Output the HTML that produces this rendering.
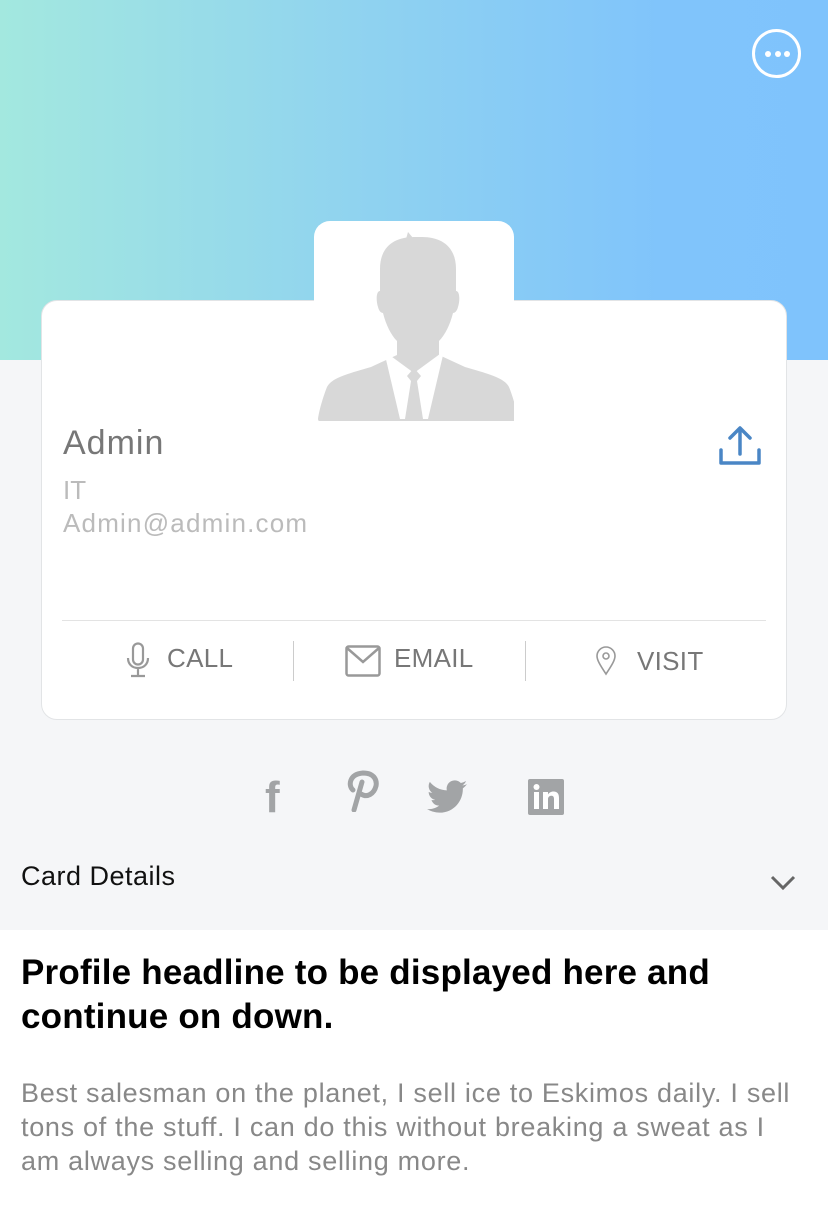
<!DOCTYPE html>
<html><head><meta charset="utf-8"><style>
*{margin:0;padding:0;box-sizing:border-box}
body{width:828px;height:1206px;overflow:hidden;background:#fff;font-family:"Liberation Sans",Helvetica,Arial,sans-serif;position:relative}
.hdr{position:absolute;left:0;top:0;width:828px;height:360px;background:linear-gradient(90deg,#a3e8df 0%,#8fd2f0 45%,#80c4fb 80%,#7fc3fc 100%)}
.gray{position:absolute;left:0;top:360px;width:828px;height:570px;background:#f5f6f8}
.more{position:absolute;left:752px;top:29px;width:49px;height:49px;border:3px solid #fff;border-radius:50%}
.more i{position:absolute;top:19px;width:6px;height:6px;background:#fff;border-radius:50%}
.card{position:absolute;left:41px;top:300px;width:746px;height:420px;background:#fff;border:1px solid #e2e4e6;border-radius:16px}
.tab{position:absolute;left:314px;top:221px;width:200px;height:200px;background:#fff;border-radius:16px}
.t{position:absolute;white-space:nowrap}
.act{position:absolute;top:643px;font-size:26px;color:#777;letter-spacing:0.3px}
.sep{position:absolute;top:641px;width:1px;height:40px;background:#ccc}
</style></head><body>
<div class="hdr"></div><div class="gray"></div>
<div class="more"><i style="left:10px"></i><i style="left:19.5px"></i><i style="left:29px"></i></div>
<div class="card"></div>
<div class="tab"></div>
<svg style="position:absolute;left:314px;top:221px" width="200" height="200" viewBox="0 0 200 200">
<path fill="#d8d8d8" d="M100 16c-20 0-34 10-34 32v22c-4 0-4 10-2 16 1 4 3 6 5 6 3 12 8 22 14 28v14l-26 12c-28 8-40 12-44 20-4 10-8 24-9 32 0 2 2 4 6 4h188c4 0 6-2 6-4-1-8-5-22-9-32-4-8-16-12-44-20l-26-12v-14c6-6 11-16 14-28 2 0 4-2 5-6 2-6 2-16-2-16V48c0-22-14-32-34-32z"/>
<path fill="#d8d8d8" d="M92 18l2-7 5 6z"/>
<path fill="#fff" d="M70 130l30 22 30-22-16 68H86z"/>
<path fill="#d8d8d8" d="M93 155l7-8 7 8-4 5 6 38H91l6-38z"/>
</svg>
<div class="t" style="left:63px;top:424px;font-size:34px;color:#777;letter-spacing:1px">Admin</div>
<div class="t" style="left:63px;top:475px;font-size:26px;color:#bbb">IT</div>
<div class="t" style="left:63px;top:508px;font-size:26px;color:#bbb;letter-spacing:1.2px">Admin@admin.com</div>
<svg style="position:absolute;left:718px;top:426px" width="44" height="42" viewBox="0 0 44 42" fill="none" stroke="#4a86c5" stroke-width="3.5" stroke-linecap="round" stroke-linejoin="round"><path d="M22 28V3M12 12l10-10 10 10M3 24v13h38V24"/></svg>
<div style="position:absolute;left:62px;top:620px;width:704px;height:1px;background:#e3e3e3"></div>
<svg style="position:absolute;left:124px;top:642px" width="28" height="36" viewBox="0 0 28 36" fill="none" stroke="#999" stroke-width="2.2"><rect x="9" y="1.5" width="10" height="21" rx="5"/><path d="M4 16c0 6 4 10 10 10s10-4 10-10M14 26v7M7 34h14"/></svg>
<div class="act" style="left:167px">CALL</div>
<div class="sep" style="left:293px"></div>
<svg style="position:absolute;left:345px;top:645px" width="36" height="32" viewBox="0 0 36 32" fill="none" stroke="#999" stroke-width="2.5"><rect x="1.5" y="1.5" width="33" height="29" rx="2"/><path d="M2 3l16 14 16-14"/></svg>
<div class="act" style="left:394px">EMAIL</div>
<div class="sep" style="left:525px"></div>
<svg style="position:absolute;left:594px;top:646px" width="24" height="30" viewBox="0 0 24 30" fill="none" stroke="#999" stroke-width="1.6"><path d="M12 28C6 19 3 14 3 10a9 9 0 0118 0c0 4-3 9-9 18z"/><circle cx="12" cy="10" r="3"/></svg>
<div class="act" style="left:637px;top:646px">VISIT</div>
<div class="t" style="left:265px;top:773px;font-size:44px;font-weight:bold;color:#a2a4a6">f</div>
<svg style="position:absolute;left:345px;top:770px" width="34" height="42" viewBox="0 0 34 42" fill="none" stroke="#a2a4a6" stroke-width="5" stroke-linecap="round"><path d="M8 20c-5-4-4-16 10-17 12 0 14 8 13 13-2 8-9 12-15 8M17 12L9 40"/></svg>
<svg style="position:absolute;left:427px;top:780px" width="40" height="34" viewBox="0 0 24 20"><path fill="#a2a4a6" d="M24 2.3c-.9.4-1.8.7-2.8.8 1-.6 1.8-1.6 2.2-2.7-1 .6-2 1-3.1 1.2A4.9 4.9 0 0011.9 6 14 14 0 011.7.9a4.9 4.9 0 001.5 6.6c-.8 0-1.6-.3-2.2-.6 0 2.4 1.7 4.4 3.9 4.8-.7.2-1.5.2-2.2.1.6 2 2.4 3.4 4.6 3.4A9.900 9.9 0 010 17.2 14 14 0 007.5 19.4c9 0 14-7.5 14-14v-.6c1-.7 1.8-1.6 2.5-2.5z"/></svg>
<svg style="position:absolute;left:528px;top:779px" width="36" height="36" viewBox="0 0 36 36"><rect width="36" height="36" rx="2" fill="#a2a4a6"/><rect x="6" y="13" width="5" height="17" fill="#fff"/><circle cx="8.5" cy="8" r="3" fill="#fff"/><path fill="#fff" d="M15 13h5v2.5c1-1.8 3-3 5.5-3 4 0 5.5 2.5 5.5 6.5V30h-5v-10c0-2-.7-3.3-2.6-3.3S20 18 20 20v10h-5z"/></svg>
<div class="t" style="left:21px;top:861px;font-size:27px;color:#111;letter-spacing:0.5px">Card Details</div>
<svg style="position:absolute;left:770px;top:875px" width="26" height="16" viewBox="0 0 26 16" fill="none" stroke="#666" stroke-width="3"><path d="M2 2l11 11 11-11"/></svg>
<div class="t" style="left:21px;top:951px;font-size:35px;font-weight:bold;color:#000;line-height:44px;white-space:normal;width:740px;letter-spacing:0.2px">Profile headline to be displayed here and continue on down.</div>
<div class="t" style="left:21px;top:1076px;font-size:27px;color:#888;line-height:34px;white-space:normal;width:782px;letter-spacing:0.7px">Best salesman on the planet, I sell ice to Eskimos daily. I sell tons of the stuff. I can do this without breaking a sweat as I am always selling and selling more.</div>
</body></html>
